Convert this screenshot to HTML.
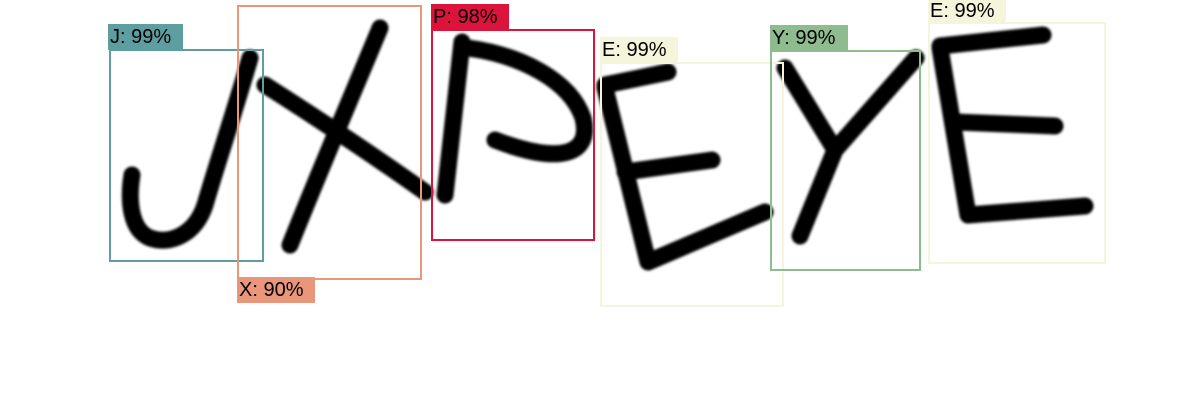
<!DOCTYPE html>
<html><head><meta charset="utf-8"><style>
body{margin:0;width:1200px;height:420px;background:#fff;position:relative;overflow:hidden;font-family:"Liberation Sans",sans-serif}
.b{position:absolute;box-sizing:border-box;border:2px solid}
.l{position:absolute;font-size:20px;line-height:26px;color:#000;padding:0 2px;box-sizing:border-box;height:26px}
svg{position:absolute;left:0;top:0}
</style></head><body>
<svg width="1200" height="420"><defs><filter id="f"><feGaussianBlur stdDeviation="1.2"/></filter></defs>
<g fill="none" stroke="#000" stroke-width="17" stroke-linecap="round" stroke-linejoin="round" filter="url(#f)">
<path d="M250 58 C235 110 215 170 205 205 C195 235 170 245 150 238 C130 230 128 200 132 175"/>
<path d="M380 28 C350 100 320 170 290 245"/>
<path d="M265 85 C320 120 380 160 425 192"/>
<path d="M462 42 L445 195"/>
<path d="M468 48 C520 55 570 80 583 118 C592 155 560 165 495 140"/>
<path d="M605 88 L648 262 L765 212"/>
<path d="M605 85 L668 72"/>
<path d="M625 172 L712 160"/>
<path d="M785 68 L835 150 L916 58"/>
<path d="M835 150 L800 236"/>
<path d="M940 48 L968 215 L1085 206"/>
<path d="M940 46 L1043 35"/>
<path d="M955 122 L1055 126"/>
</g></svg>
<div class="b" style="left:109px;top:49px;width:155px;height:213px;border-color:#5f9ea0"></div>
<div class="l" style="left:108px;top:24px;width:75px;background:#5f9ea0">J: 99%</div>
<div class="b" style="left:237px;top:5px;width:185px;height:275px;border-color:#e9967a"></div>
<div class="l" style="left:237px;top:277px;width:78px;background:#e9967a">X: 90%</div>
<div class="b" style="left:431px;top:29px;width:164px;height:212px;border-color:#dc143c"></div>
<div class="l" style="left:431px;top:4px;width:78px;background:#dc143c">P: 98%</div>
<div class="b" style="left:600px;top:62px;width:184px;height:245px;border-color:#f5f5dc"></div>
<div class="l" style="left:600px;top:37px;width:78px;background:#f5f5dc">E: 99%</div>
<div class="b" style="left:770px;top:50px;width:151px;height:221px;border-color:#8fbc8f"></div>
<div class="l" style="left:770px;top:25px;width:78px;background:#8fbc8f">Y: 99%</div>
<div class="b" style="left:928px;top:22px;width:178px;height:242px;border-color:#f5f5dc"></div>
<div class="l" style="left:928px;top:-2px;width:78px;background:#f5f5dc">E: 99%</div>
</body></html>
